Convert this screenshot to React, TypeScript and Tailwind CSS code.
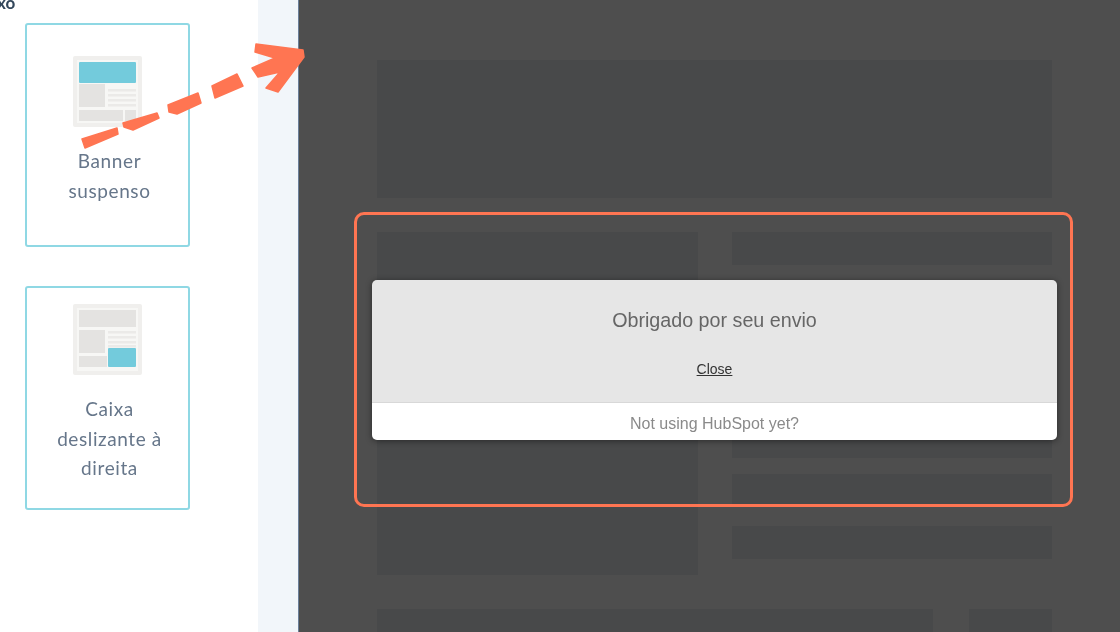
const BARS = ['', 'mt-4', 'mt-4', 'mt-4', 'mt-[13px]', 'mt-4', 'mt-[19px]']

function PageIcon({ variant }: { variant: 'banner' | 'slide' }) {
  return (
    <svg width="69" height="71" viewBox="0 0 69 71" className="block mx-auto">
      <rect x="0" y="0" width="69" height="71" rx="2" fill="#f0efed" />
      <rect x="4" y="4" width="61" height="63" fill="#f7f7f5" />
      {variant === 'banner' ? (
        <>
          <rect x="6" y="6" width="57" height="21" rx="1" fill="#73cbdc" />
          <rect x="6" y="28" width="26" height="23" fill="#e4e3e1" />
          {[33, 38, 43, 48].map((y) => (
            <rect key={y} x="35" y={y} width="28" height="2.5" fill="#ebeae8" />
          ))}
          <rect x="6" y="54" width="44" height="11" fill="#e4e3e1" />
          <rect x="52" y="54" width="11" height="11" fill="#e4e3e1" />
        </>
      ) : (
        <>
          <rect x="6" y="6" width="57" height="17" fill="#e4e3e1" />
          <rect x="6" y="26" width="26" height="23" fill="#e4e3e1" />
          {[27, 32, 37, 41].map((y) => (
            <rect key={y} x="35" y={y} width="28" height="2.5" fill="#ebeae8" />
          ))}
          <rect x="6" y="52" width="28" height="11" fill="#e4e3e1" />
          <rect x="35" y="44" width="28" height="19" rx="1" fill="#73cbdc" />
        </>
      )}
    </svg>
  )
}

function OptionCard({ label, variant, className }: { label: string[]; variant: 'banner' | 'slide'; className: string }) {
  return (
    <div className={`w-[165px] border-2 border-[#8fd8e4] rounded-[3px] bg-white ${className}`}>
      <PageIcon variant={variant} />
      <div className="mt-[19px] pl-[4px] text-center text-[19px] leading-[29.5px] tracking-[0.6px] text-[#66768a] font-['Lato',sans-serif] blur-[0.3px]">
        {label.map((l) => (
          <div key={l}>{l}</div>
        ))}
      </div>
    </div>
  )
}

export default function App() {
  return (
    <div className="relative flex h-[632px] w-[1120px] overflow-hidden bg-white font-['Liberation_Sans',sans-serif]">
      {/* Sidebar */}
      <aside className="w-[258px] flex-shrink-0 bg-white pl-[25px]">
        <div className="-ml-[28px] -mt-[7px] h-[30px] text-[17px] leading-[20px] font-bold text-[#33475b] font-['Lato',sans-serif] blur-[0.3px]">xo</div>
        <OptionCard className="h-[224px] pt-[31px]" label={['Banner', 'suspenso']} variant="banner" />
        <OptionCard className="mt-[39px] h-[224px] pt-[16px]" label={['Caixa', 'deslizante à', 'direita']} variant="slide" />
      </aside>
      <div className="w-[40px] flex-shrink-0 bg-[#f2f6fa]" />

      {/* Darkened page preview */}
      <main className="relative flex-1 border-l border-[#6b7f99] bg-[#4e4e4e] pl-[78px] pr-[68px] pt-[60px]">
        <div className="h-[138px] bg-[#48494a]" />
        <div className="mt-[34px] grid grid-cols-[321px_1fr] gap-x-[34px]">
          <div className="h-[343px] bg-[#48494a]" />
          <div>
            {BARS.map((m, i) => (
              <div key={i} className={`h-[33px] bg-[#48494a] ${m}`} />
            ))}
          </div>
        </div>
        <div className="mt-[34px] flex gap-[36px]">
          <div className="h-[40px] w-[556px] bg-[#48494a]" />
          <div className="h-[40px] flex-1 bg-[#48494a]" />
        </div>

        {/* Highlight frame */}
        <div className="absolute left-[55px] top-[212px] h-[295px] w-[719px] rounded-[10px] border-[3.5px] border-[#ff7552]" />

        {/* Thank-you modal */}
        <div className="absolute left-[73px] top-[280px] w-[685px] overflow-hidden rounded-[5px] shadow-[0_1px_6px_rgba(0,0,0,0.45)]">
          <div className="flex h-[123px] flex-col items-center border-b border-[#d8d8d8] bg-[#e6e6e6]">
            <p className="mt-[28px] text-[19.7px] leading-[24px] text-[#666666] blur-[0.3px]">Obrigado por seu envio</p>
            <a className="mt-[29px] text-[14px] leading-[17px] text-[#333333] underline blur-[0.3px]">Close</a>
          </div>
          <div className="flex h-[37px] items-center justify-center bg-white pt-[4px] text-[16px] text-[#8a8a8a] blur-[0.3px]">
            Not using HubSpot yet?
          </div>
        </div>
      </main>

      {/* Dashed arrow annotation */}
      <svg className="absolute left-0 top-0 pointer-events-none" width="320" height="160" viewBox="0 0 320 160">
        <g fill="#ff7552" stroke="#ff7552" strokeWidth="1.5" strokeLinejoin="round">
          <polygon points="82,139 117,128 118,134 85,148" />
          <polygon points="123,123 157,113 159,118 133,130 124,127" />
          <polygon points="168,105 198,93 201,103 177,114 169,112" />
          <polygon points="212,86 237,74 243,86 215,98" />
          <polygon points="256,44 303,50 304,57 278,92 266,88 280,72 258,77 252,68 275,58 255,52" />
        </g>
      </svg>
    </div>
  )
}
